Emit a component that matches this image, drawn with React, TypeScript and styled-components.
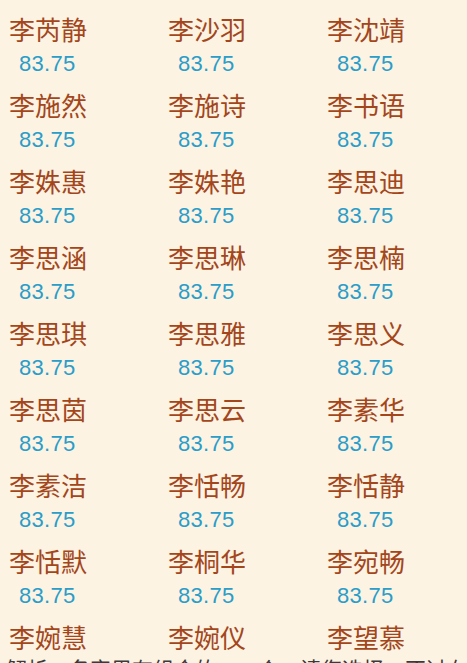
import React from "react";
import styled, { createGlobalStyle } from "styled-components";

const Global = createGlobalStyle`
  html, body {
    margin: 0;
    padding: 0;
    background: #fdf3e3;
    overflow: hidden;
  }
  body {
    font-family: "Liberation Sans", "Noto Sans CJK SC", sans-serif;
  }
`;

const Page = styled.div`
  width: 467px;
  height: 663px;
  background: #fdf3e3;
  overflow: hidden;
  padding-top: 12px;
  box-sizing: border-box;
`;

const Grid = styled.div`
  display: grid;
  grid-template-columns: 159px 159px 1fr;
  padding-left: 9px;
`;

const Cell = styled.div<{ $last?: boolean }>`
  display: flex;
  flex-direction: column;
  height: ${(p) => (p.$last ? "34px" : "76px")};
`;

const Name = styled.div`
  font-family: "Noto Sans CJK SC", sans-serif;
  font-size: 26px;
  line-height: 34px;
  color: #a3461b;
  white-space: nowrap;
`;

const Score = styled.div`
  font-family: "Liberation Sans", Arial, sans-serif;
  font-size: 22px;
  line-height: 32px;
  margin-top: 2px;
  color: #2a9dc9;
  padding-left: 10px;
  letter-spacing: 0.3px;
`;

const Note = styled.div`
  font-family: "Noto Sans CJK SC", sans-serif;
  font-size: 21px;
  line-height: 24px;
  margin-top: 2px;
  color: #3a3a3a;
  padding-left: 6px;
  white-space: nowrap;
`;

const names = [
  "李芮静", "李沙羽", "李沈靖",
  "李施然", "李施诗", "李书语",
  "李姝惠", "李姝艳", "李思迪",
  "李思涵", "李思琳", "李思楠",
  "李思琪", "李思雅", "李思义",
  "李思茵", "李思云", "李素华",
  "李素洁", "李恬畅", "李恬静",
  "李恬默", "李桐华", "李宛畅",
  "李婉慧", "李婉仪", "李望慕",
];

export default function App() {
  const lastStart = names.length - 3;
  return (
    <>
      <Global />
      <Page>
        <Grid>
          {names.map((n, i) => (
            <Cell key={i} $last={i >= lastStart}>
              <Name>{n}</Name>
              {i < lastStart && <Score>83.75</Score>}
            </Cell>
          ))}
        </Grid>
        <Note>解析：名字里有组合的……个，请您选择，不过在这方面</Note>
      </Page>
    </>
  );
}
